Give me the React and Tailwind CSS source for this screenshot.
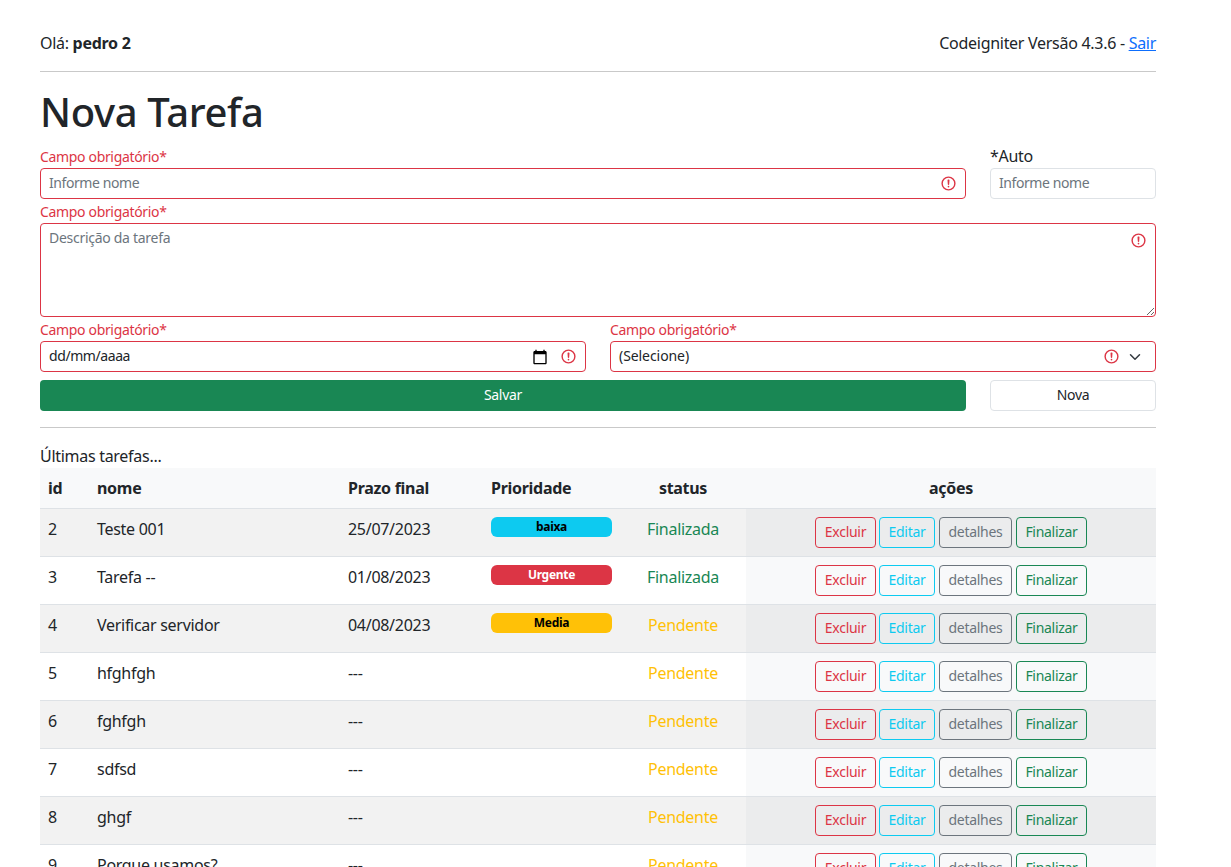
import React from 'react';

const tarefas = [
  { id: 2, nome: 'Teste 001', prazo: '25/07/2023', prioridade: 'baixa', status: 'Finalizada' },
  { id: 3, nome: 'Tarefa --', prazo: '01/08/2023', prioridade: 'Urgente', status: 'Finalizada' },
  { id: 4, nome: 'Verificar servidor', prazo: '04/08/2023', prioridade: 'Media', status: 'Pendente' },
  { id: 5, nome: 'hfghfgh', prazo: '---', status: 'Pendente' },
  { id: 6, nome: 'fghfgh', prazo: '---', status: 'Pendente' },
  { id: 7, nome: 'sdfsd', prazo: '---', status: 'Pendente' },
  { id: 8, nome: 'ghgf', prazo: '---', status: 'Pendente' },
  { id: 9, nome: 'Porque usamos?', prazo: '---', status: 'Pendente' },
];

const badgeClass = {
  baixa: 'bg-[#0dcaf0] text-black',
  Urgente: 'bg-[#dc3545] text-white',
  Media: 'bg-[#ffc107] text-black',
};

function InvalidIcon({ className }) {
  return (
    <svg viewBox="0 0 12 12" fill="none" stroke="#dc3545" className={className}>
      <circle cx="6" cy="6" r="4.5" />
      <path strokeLinejoin="round" d="M5.8 3.6h.4L6 6.5z" />
      <circle cx="6" cy="8.2" r=".6" fill="#dc3545" stroke="none" />
    </svg>
  );
}

function Erro() {
  return <div className="h-[21px] text-sm leading-[19px] tracking-[-0.024em] text-[#dc3545]">Campo obrigatório*</div>;
}

function AcaoBtn({ children, className }) {
  return (
    <button className={`h-[31px] rounded-[4px] border pb-0.5 text-sm ${className}`}>{children}</button>
  );
}

export default function App() {
  return (
    <div className="ml-10 w-[1116px] font-['Noto_Sans',sans-serif] text-base leading-6 tracking-[-0.018em] text-[#212529]">
      <div className="flex justify-between pt-[31px] pb-4">
        <div>
          Olá: <b>pedro 2</b>
        </div>
        <div>
          Codeigniter Versão 4.3.6 - <a href="#" className="text-[#0d6efd] underline">Sair</a>
        </div>
      </div>
      <hr className="border-[#c9c9c9]" />
      <h1 className="mt-4 mb-2 text-[40px] leading-[48px] font-medium tracking-[-0.009em]">Nova Tarefa</h1>

      <form>
        <div className="flex items-end gap-6">
          <div className="w-[926px]">
            <Erro />
            <div className="flex h-[31px] items-center rounded-[4px] border border-[#dc3545] pr-2 pl-2">
              <input placeholder="Informe nome" className="min-w-0 flex-1 pb-0.5 text-sm tracking-[-0.03em] outline-none placeholder:text-[#6c757d]" />
              <InvalidIcon className="h-[17px] w-[17px]" />
            </div>
          </div>
          <div className="w-[166px]">
            <label className="block">*Auto</label>
            <input placeholder="Informe nome" className="block h-[31px] w-full rounded-[4px] border border-[#dee2e6] px-2 pb-0.5 text-sm tracking-[-0.03em] outline-none placeholder:text-[#6c757d]" />
          </div>
        </div>

        <div className="mt-[3px]">
          <Erro />
          <div className="relative h-[94px]">
            <textarea placeholder="Descrição da tarefa" className="block h-[94px] w-full rounded-[4px] border border-[#dc3545] px-2 py-1 text-sm outline-none placeholder:text-[#6c757d]" />
            <InvalidIcon className="absolute top-[8.5px] right-[9px] h-[17px] w-[17px]" />
          </div>
        </div>

        <div className="mt-[3px] flex gap-6">
          <div className="w-[546px]">
            <Erro />
            <div className="flex h-[31px] items-center rounded-[4px] border border-[#dc3545] pr-2 pl-2 text-sm">
              <span className="flex-1 pb-0.5 tracking-[-0.03em]">dd/mm/aaaa</span>
              <svg viewBox="0 0 24 24" className="mr-3 h-4 w-4" fill="#000">
                <path d="M20 3h-1V1h-2v2H7V1H5v2H4c-1.1 0-2 .9-2 2v16c0 1.1.9 2 2 2h16c1.1 0 2-.9 2-2V5c0-1.1-.9-2-2-2zm0 18H4V8h16v13z" />
              </svg>
              <InvalidIcon className="h-[17px] w-[17px]" />
            </div>
          </div>
          <div className="w-[546px]">
            <Erro />
            <div className="flex h-[31px] items-center rounded-[4px] border border-[#dc3545] pr-[14px] pl-2 text-sm">
              <span className="flex-1 pb-0.5 tracking-[-0.005em]">(Selecione)</span>
              <InvalidIcon className="mr-[9px] h-[17px] w-[17px]" />
              <svg viewBox="0 0 16 16" fill="none" stroke="#343a40" strokeWidth="2" strokeLinecap="round" strokeLinejoin="round" className="h-3 w-3">
                <path d="m2 5 6 6 6-6" />
              </svg>
            </div>
          </div>
        </div>

        <div className="mt-2 flex gap-6">
          <button type="button" className="h-[31px] w-[926px] rounded-[4px] bg-[#198754] pb-0.5 text-sm text-white">Salvar</button>
          <button type="button" className="h-[31px] w-[166px] rounded-[4px] border border-[#dee2e6] pb-0.5 text-sm">Nova</button>
        </div>
      </form>

      <hr className="mt-4 border-[#c9c9c9]" />
      <div className="mt-4">Últimas tarefas...</div>

      <table className="w-full table-fixed border-collapse">
        <colgroup>
          <col className="w-[49px]" />
          <col className="w-[251px]" />
          <col className="w-[143px]" />
          <col className="w-[137px]" />
          <col className="w-[126px]" />
          <col className="w-[410px]" />
        </colgroup>
        <thead>
          <tr className="border-b border-[#dee2e6] bg-[#f8f9fa] text-left">
            <th className="p-2">id</th>
            <th className="p-2">nome</th>
            <th className="p-2">Prazo final</th>
            <th className="p-2">Prioridade</th>
            <th className="p-2 text-center">status</th>
            <th className="p-2 text-center">ações</th>
          </tr>
        </thead>
        <tbody>
          {tarefas.map((t, i) => (
            <tr key={t.id} className={`border-b border-[#dee2e6] ${i % 2 === 0 ? 'bg-[#f2f2f2]' : 'bg-white'}`}>
              <td className="p-2 align-top">{t.id}</td>
              <td className="p-2 align-top">{t.nome}</td>
              <td className="p-2 align-top">{t.prazo}</td>
              <td className="p-2 align-top">
                {t.prioridade && (
                  <div className={`h-5 rounded-md text-center text-xs leading-[20px] font-bold ${badgeClass[t.prioridade]}`}>
                    {t.prioridade}
                  </div>
                )}
              </td>
              <td className={`p-2 text-center align-top ${t.status === 'Finalizada' ? 'text-[#198754]' : 'text-[#ffc107]'}`}>
                {t.status}
              </td>
              <td className={`p-2 align-top ${i % 2 === 0 ? 'bg-[#ebeced]' : 'bg-[#f8f9fa]'}`}>
                <div className="flex justify-center gap-1">
                  <AcaoBtn className="w-[61px] border-[#dc3545] text-[#dc3545]">Excluir</AcaoBtn>
                  <AcaoBtn className="-ml-px w-[56px] border-[#0dcaf0] text-[#0dcaf0]">Editar</AcaoBtn>
                  <AcaoBtn className="w-[73px] border-[#6c757d] text-[#6c757d]">detalhes</AcaoBtn>
                  <AcaoBtn className="w-[71px] border-[#198754] text-[#198754]">Finalizar</AcaoBtn>
                </div>
              </td>
            </tr>
          ))}
        </tbody>
      </table>
    </div>
  );
}
